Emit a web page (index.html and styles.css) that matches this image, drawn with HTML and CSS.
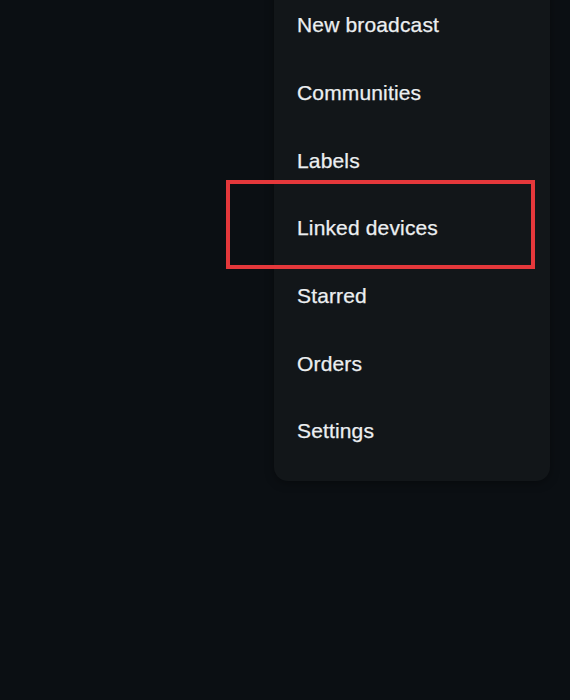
FILE: index.html
```html
<!DOCTYPE html>
<html>
<head>
<meta charset="utf-8">
<link rel="stylesheet" href="styles.css">
</head>
<body>
<div class="screen">
  <ul class="menu">
    <li class="item">New broadcast</li>
    <li class="item">Communities</li>
    <li class="item">Labels</li>
    <li class="item">Linked devices</li>
    <li class="item">Starred</li>
    <li class="item">Orders</li>
    <li class="item">Settings</li>
  </ul>
  <div class="highlight"></div>
</div>
</body>
</html>
```

FILE: styles.css
```css
html, body {
  margin: 0;
  padding: 0;
  background: #0b0f13;
}
.screen {
  position: relative;
  width: 570px;
  height: 700px;
  overflow: hidden;
  background: #0b0f13;
  font-family: "Liberation Sans", Arial, sans-serif;
}
.menu {
  position: absolute;
  left: 274px;
  top: -30px;
  width: 276px;
  margin: 0;
  padding: 21px 0 16px 0;
  list-style: none;
  background: #121619;
  border-radius: 14px;
  box-shadow: 0 2px 10px rgba(0, 0, 0, 0.35);
}
.item {
  height: 67.7px;
  display: flex;
  align-items: center;
  padding-left: 23px;
  padding-top: 1px;
  box-sizing: border-box;
  color: #eceff1;
  font-size: 21px;
  letter-spacing: 0.15px;
  -webkit-text-stroke: 0.25px #eceff1;
}
.highlight {
  position: absolute;
  left: 226px;
  top: 180px;
  width: 301px;
  height: 81px;
  border: 4px solid #e5383b;
}
```
